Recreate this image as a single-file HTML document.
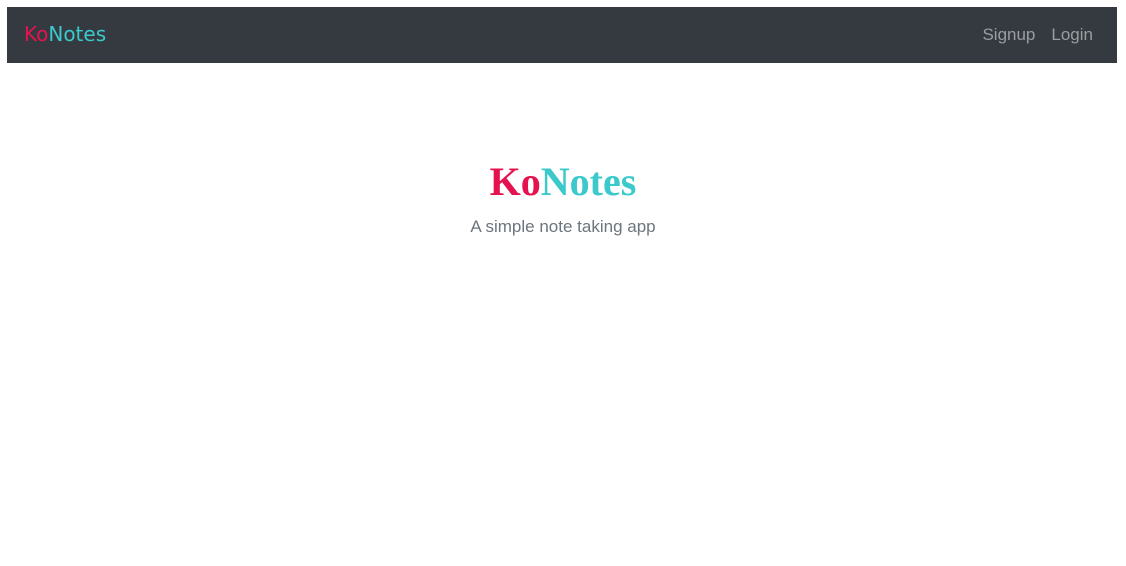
<!DOCTYPE html>
<html><head><style>
body{margin:0;background:#fff;font-family:"DejaVu Sans","Liberation Sans",sans-serif;width:1126px;height:566px;overflow:hidden;position:relative}
.nav{position:absolute;left:7px;top:7px;width:1110px;height:56px;background:#343a40}
.brand{position:absolute;left:17px;top:14px;font-size:20px;line-height:26px}
.k{color:#e4134f}.n{color:#3bc9cc}
.links{position:absolute;right:24px;top:16px;font-size:17px;color:#9a9da1;line-height:24px;font-family:"Liberation Sans",sans-serif}
.links span{margin-left:16px}
h1{position:absolute;left:0;width:1126px;top:159px;margin:0;text-align:center;font-family:"Liberation Serif",serif;font-weight:bold;font-size:40px;line-height:46px}
p{position:absolute;left:0;width:1126px;top:216px;margin:0;text-align:center;color:#6c757d;font-size:17px;line-height:22px;font-family:"Liberation Sans",sans-serif}
</style></head><body>
<div class="nav"><div class="brand"><span class="k">Ko</span><span class="n">Notes</span></div>
<div class="links"><span>Signup</span><span>Login</span></div></div>
<h1><span class="k">Ko</span><span class="n">Notes</span></h1>
<p>A simple note taking app</p>
</body></html>
